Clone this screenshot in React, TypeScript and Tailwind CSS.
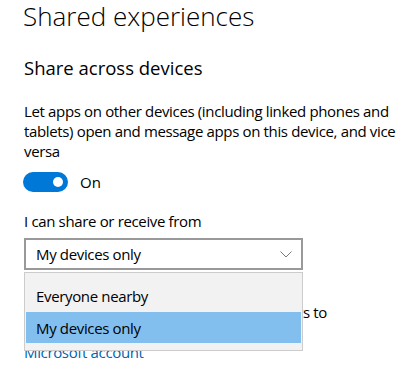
import React from "react";

export default function App() {
  return (
    <div className="w-[411px] h-[370px] overflow-hidden bg-white relative font-['Open_Sans',sans-serif] text-black">
      <div className="pl-[23px]">
        <h1 className="text-[26px] font-light leading-[36px] mt-[-2px] whitespace-nowrap">Shared experiences</h1>
        <h2 className="text-[18.5px] font-normal leading-[28px] mt-[20px] pl-[1px] whitespace-nowrap">Share across devices</h2>
        <p className="text-[15px] leading-[20px] tracking-[-0.35px] mt-[19px] pl-[1px] w-[386px]">
          Let apps on other devices (including linked phones and tablets) open and message apps on this device, and vice versa
        </p>
        <div className="flex items-center mt-[11px] h-[20px]">
          <div className="w-[45px] h-[20px] rounded-full bg-[#0078d7] flex items-center justify-end pr-[5px]">
            <div className="w-[10px] h-[10px] rounded-full bg-white" />
          </div>
          <span className="ml-[12px] text-[15px] leading-[20px]">On</span>
        </div>
        <div className="text-[15px] leading-[20px] tracking-[-0.35px] mt-[19px] pl-[1px]">I can share or receive from</div>
        <div className="relative mt-[7px] w-[280px] pl-[1px]">
          <div className="h-[32px] border-2 border-[#999999] flex items-center justify-between pl-[10px] pr-[9px]">
            <span className="text-[15px] leading-[20px] tracking-[-0.35px]">My devices only</span>
            <svg width="12" height="7" viewBox="0 0 12 7">
              <path d="M0.5 0.5 L6 6 L11.5 0.5" fill="none" stroke="#7a7a7a" strokeWidth="1" />
            </svg>
          </div>
          <div className="absolute left-[1px] top-[34px] w-[279px] z-10 border border-[#cccccc] bg-[#f2f2f2] pt-[7px] pb-[7px]">
            <div className="h-[32px] flex items-center pl-[11px] text-[15px] leading-[20px] tracking-[-0.35px]">Everyone nearby</div>
            <div className="h-[31px] mx-[1px] bg-[#82bfef] flex items-center pl-[10px] text-[15px] leading-[20px] tracking-[-0.35px]">My devices only</div>
          </div>
        </div>
        <div className="text-[15px] leading-[20px] tracking-[-0.35px] mt-[12px] pl-[1px] w-[304px]">
          <div className="whitespace-nowrap overflow-hidden">Your devices need to be signed in</div>
          <div className="whitespace-nowrap overflow-hidden text-right [direction:rtl]"><span className="[direction:ltr] [unicode-bidi:embed]">Add your devices and connect your accounts to</span></div>
          <div className="mt-[20px] text-[#0063b1] whitespace-nowrap">Microsoft account</div>
        </div>
      </div>
    </div>
  );
}
